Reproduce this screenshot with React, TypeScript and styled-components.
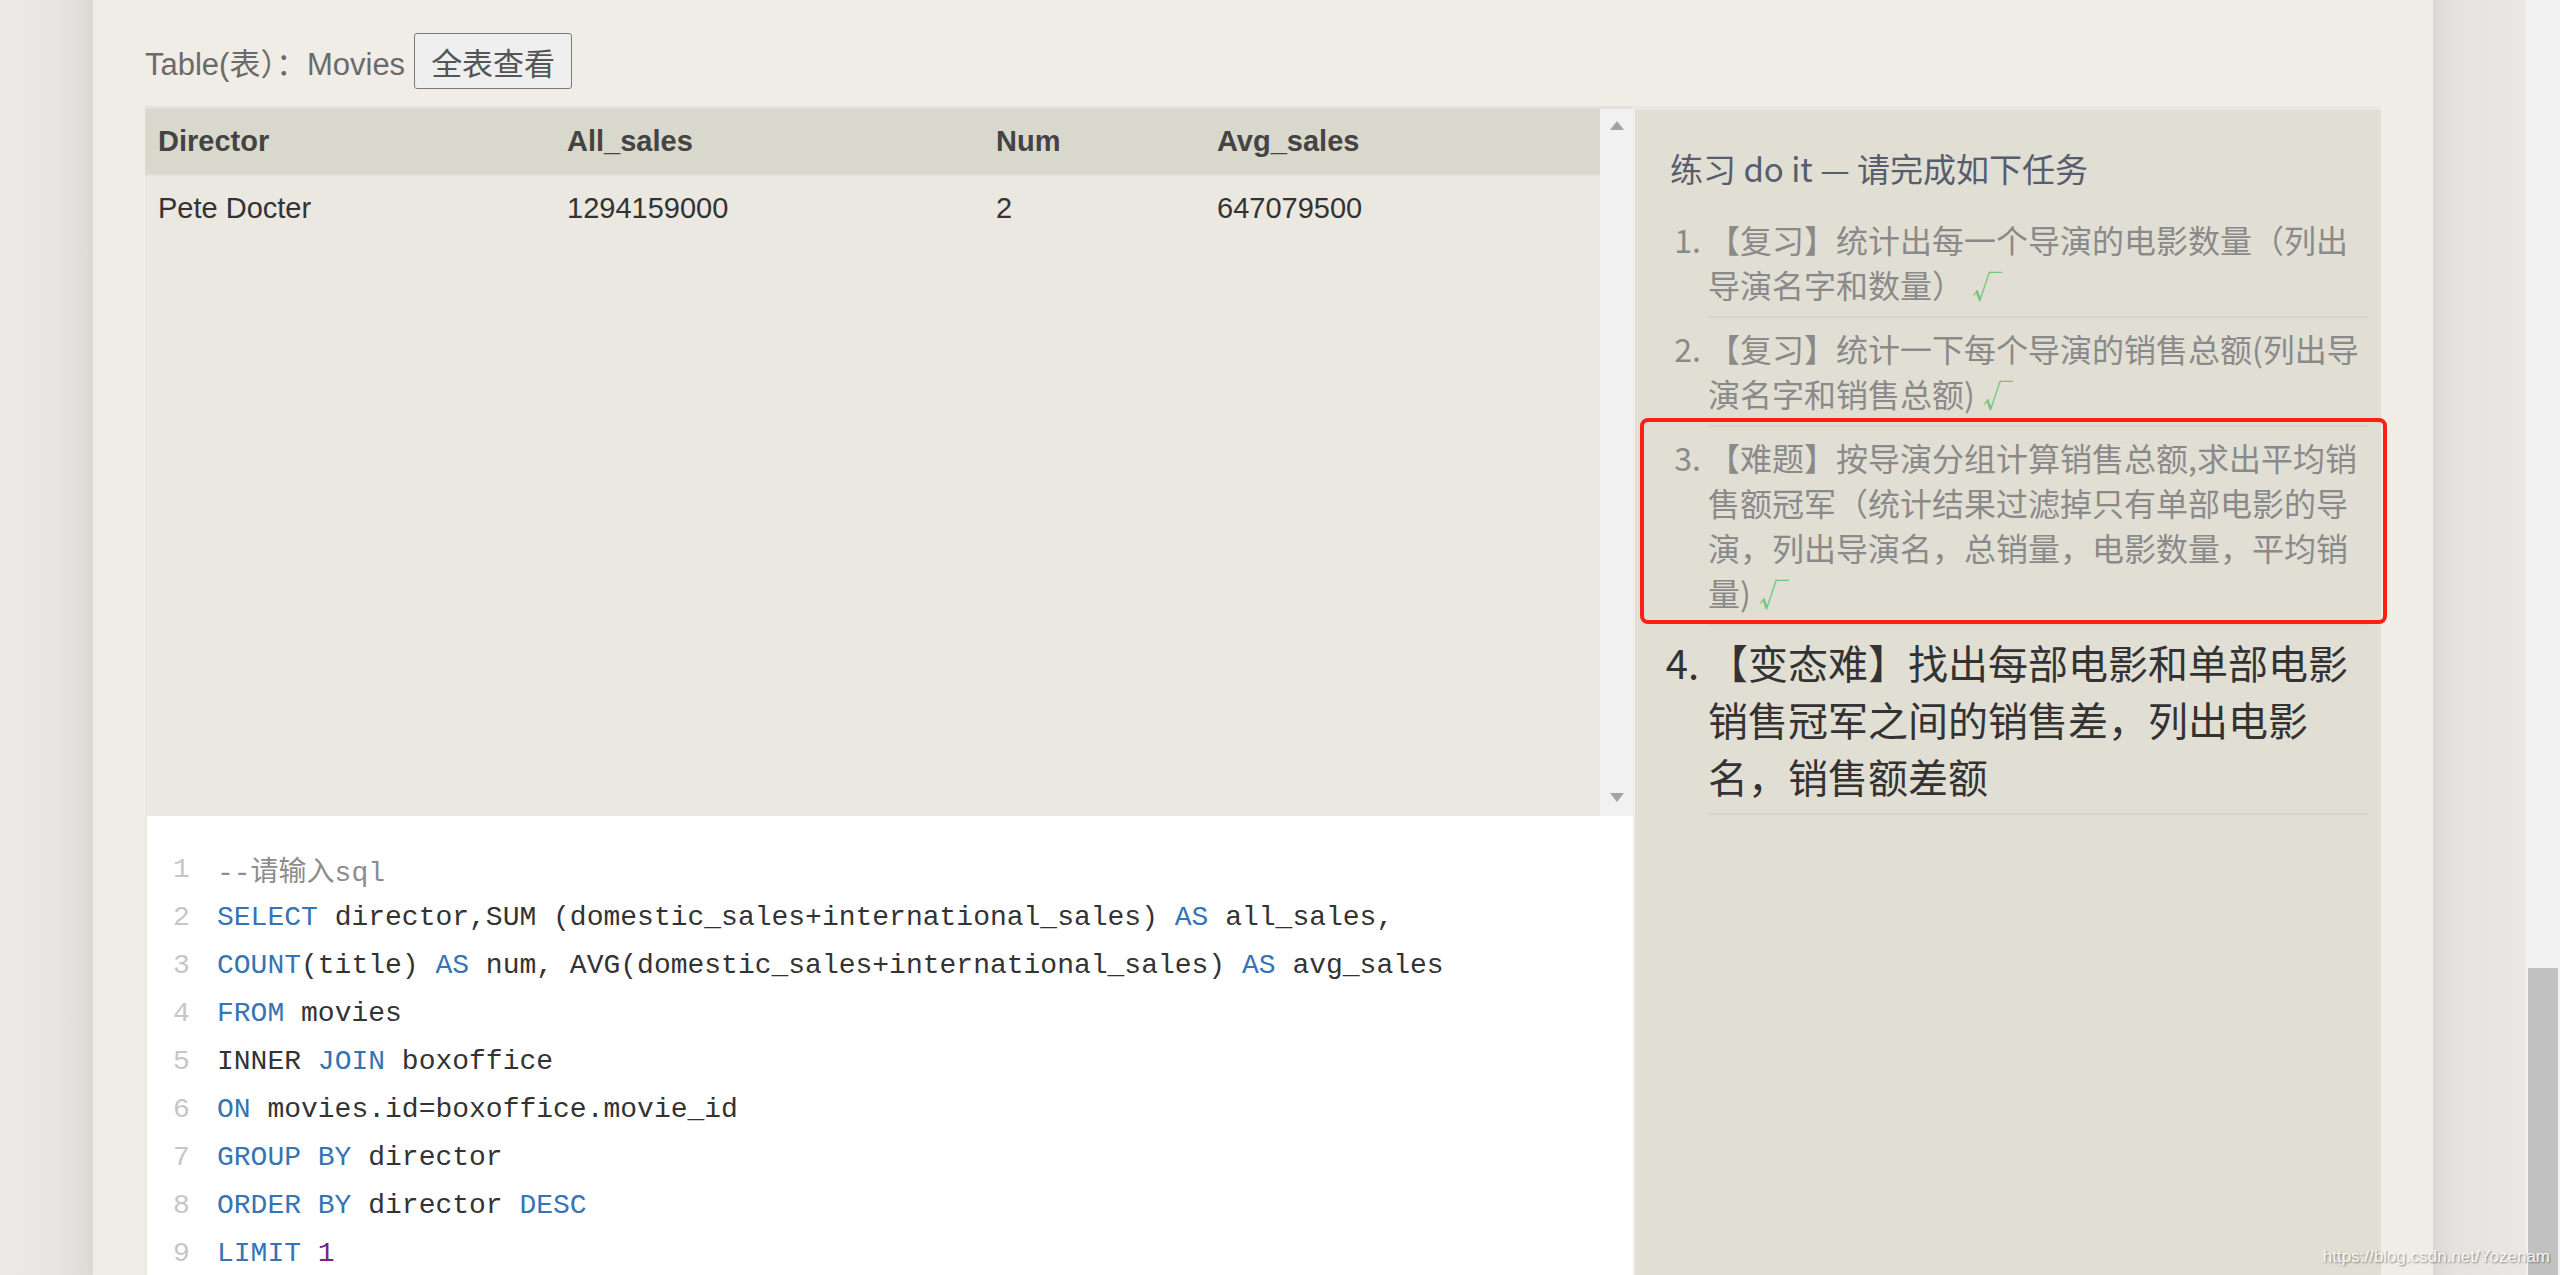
import React from "react";
import styled, {createGlobalStyle} from "styled-components";

const GlobalStyle = createGlobalStyle`
  html, body {
    margin: 0;
    padding: 0;
    overflow: hidden;
    background: #e8e4e1;
  }
  body {
    font-family: "Liberation Sans", "Noto Sans CJK SC", sans-serif;
  }
`;

const Page = styled.div`
  position: relative;
  display: flex;
  width: 2560px;
  height: 1275px;
  overflow: hidden;
`;

const Gutter = styled.div<{ $side: "left" | "right" }>`
  flex: 0 0 93px;
  background: ${p => p.$side === "left"
    ? "linear-gradient(to right, #ece9e6 0%, #e9e5e2 60%, #dcd8d4 100%)"
    : "linear-gradient(to right, #dcd8d5 0%, #e6e2df 25%, #ebe7e4 100%)"};
`;

const WinScroll = styled.div`
  flex: 0 0 34px;
  box-sizing: border-box;
  padding: 968px 0 0 2px;
  background: #f1f1f1;
`;
const WinThumb = styled.div`
  width: 30px;
  height: 320px;
  background: #c1c1c1;
`;

const Card = styled.div`
  flex: 0 0 2340px;
  box-sizing: border-box;
  display: flex;
  flex-direction: column;
  padding: 33px 52px 0;
  background: #f0ede6;
`;

const TitleRow = styled.div`
  display: flex;
  align-items: center;
  gap: 9px;
  height: 56px;
  margin-bottom: 17px;
`;
const TableLabel = styled.span`
  font-size: 31px;
  color: #6b6b6b;
  font-family: "Liberation Sans", "Noto Sans CJK SC", sans-serif;
`;
const ViewAllButton = styled.button`
  height: 56px;
  padding: 0 16px;
  font-size: 31px;
  color: #555;
  background: #efefef;
  border: 1px solid #7a7a7a;
  border-radius: 3px;
  font-family: "Noto Sans CJK SC", sans-serif;
`;

const Workspace = styled.div`
  flex: 1;
  display: flex;
  gap: 2px;
  min-height: 0;
`;

const LeftColumn = styled.div`
  flex: 0 0 1488px;
  display: flex;
  flex-direction: column;
  background: #eae8e0;
`;

const ResultBox = styled.div`
  flex: 0 0 710px;
  box-sizing: border-box;
  display: flex;
  border-top: 3px solid #e3e1dc;
`;
const ResultScroll = styled.div`
  flex: 1;
  overflow: hidden;
`;
const ResultTable = styled.table`
  width: 100%;
  border-collapse: collapse;
  table-layout: fixed;
  font-size: 29px;
`;
const HeadCell = styled.th<{ $w?: number }>`
  width: ${p => (p.$w ? `${p.$w}px` : "auto")};
  height: 65px;
  padding: 0 0 0 13px;
  text-align: left;
  font-weight: bold;
  color: #444;
  background: #d9d8cc;
  border-bottom: 2px solid #e3e1dc;
`;
const BodyCell = styled.td`
  height: 64px;
  padding: 0 0 0 13px;
  color: #333;
`;

const TableScrollbar = styled.div`
  flex: 0 0 33px;
  display: flex;
  flex-direction: column;
  justify-content: space-between;
  align-items: center;
  padding: 12px 0 14px;
  box-sizing: border-box;
  background: #f1f1f1;
`;
const Arrow = styled.div<{ $dir: "up" | "down" }>`
  width: 0;
  height: 0;
  border-left: 7px solid transparent;
  border-right: 7px solid transparent;
  ${p => p.$dir === "up"
    ? "border-bottom: 9px solid #a3a3a3;"
    : "border-top: 9px solid #a3a3a3;"}
`;

const Editor = styled.div`
  flex: 1;
  margin-left: 2px;
  padding-top: 29px;
  background: #fff;
`;
const CodeLine = styled.div`
  display: flex;
  align-items: center;
  height: 48px;
  font-family: "Liberation Mono", "Noto Sans CJK SC", monospace;
  font-size: 28px;
  color: #333;
  white-space: pre;
`;
const LineNo = styled.span`
  flex: 0 0 70px;
  box-sizing: border-box;
  padding-left: 26px;
  color: #c6c6c6;
`;
const Tok = styled.span<{ $kind: "kw" | "comment" | "num" }>`
  color: ${p => (p.$kind === "kw" ? "#3574b5" : p.$kind === "num" ? "#7b1f8c" : "#8c8c8c")};
`;

const TaskPanel = styled.div`
  flex: 0 0 746px;
  box-sizing: border-box;
  padding: 36px 13px 0 35px;
  background: #e1dfd3;
  border-top: 4px solid #e9e7df;
  font-family: "Noto Sans CJK SC", sans-serif;
`;
const TaskTitle = styled.div`
  font-size: 33px;
  line-height: 45px;
  color: #565d6e;
  margin-bottom: 18px;
`;
const TaskList = styled.ol`
  margin: 0;
  padding: 0 0 0 38px;
  list-style: decimal outside;
`;
const TaskItem = styled.li<{ $hard?: boolean }>`
  position: relative;
  padding: 8px 0;
  font-size: ${p => (p.$hard ? 40 : 32)}px;
  line-height: ${p => (p.$hard ? 57 : 45)}px;
  color: ${p => (p.$hard ? "#333" : "#8a8a8a")};
  border-bottom: 2px solid #d8d6ca;
`;
const Done = styled.span`
  display: inline-block;
  color: #72c47a;
  font-size: 30px;
  margin-left: 8px;
`;
const Highlight = styled.div`
  position: absolute;
  top: -9px;
  bottom: 0;
  left: -68px;
  right: -19px;
  border: 4px solid #ff1e16;
  border-radius: 8px;
  pointer-events: none;
`;

const Watermark = styled.div`
  position: absolute;
  right: 10px;
  bottom: 8px;
  font-family: "Liberation Sans", sans-serif;
  font-size: 17px;
  color: rgba(255, 255, 255, 0.92);
  text-shadow: 1px 1px 2px rgba(0, 0, 0, 0.45);
`;

type Piece = string | [ "kw" | "comment" | "num", string ];

const code: Piece[][] = [
    [["comment", "--请输入sql"]],
    [["kw", "SELECT"], " director,SUM (domestic_sales+international_sales) ", ["kw", "AS"], " all_sales,"],
    [["kw", "COUNT"], "(title) ", ["kw", "AS"], " num, AVG(domestic_sales+international_sales) ", ["kw", "AS"], " avg_sales"],
    [["kw", "FROM"], " movies"],
    ["INNER ", ["kw", "JOIN"], " boxoffice"],
    [["kw", "ON"], " movies.id=boxoffice.movie_id"],
    [["kw", "GROUP BY"], " director"],
    [["kw", "ORDER BY"], " director ", ["kw", "DESC"]],
    [["kw", "LIMIT"], " ", ["num", "1"]],
];

export default function App() {
    return (
        <Page>
            <GlobalStyle/>
            <Gutter $side="left"/>
            <Card>
                <TitleRow>
                    <TableLabel>Table(表）：Movies</TableLabel>
                    <ViewAllButton>全表查看</ViewAllButton>
                </TitleRow>
                <Workspace>
                    <LeftColumn>
                        <ResultBox>
                            <ResultScroll>
                                <ResultTable>
                                    <thead>
                                    <tr>
                                        <HeadCell $w={396}>Director</HeadCell>
                                        <HeadCell $w={416}>All_sales</HeadCell>
                                        <HeadCell $w={208}>Num</HeadCell>
                                        <HeadCell>Avg_sales</HeadCell>
                                    </tr>
                                    </thead>
                                    <tbody>
                                    <tr>
                                        <BodyCell>Pete Docter</BodyCell>
                                        <BodyCell>1294159000</BodyCell>
                                        <BodyCell>2</BodyCell>
                                        <BodyCell>647079500</BodyCell>
                                    </tr>
                                    </tbody>
                                </ResultTable>
                            </ResultScroll>
                            <TableScrollbar>
                                <Arrow $dir="up"/>
                                <Arrow $dir="down"/>
                            </TableScrollbar>
                        </ResultBox>
                        <Editor>
                            {code.map((line, i) => (
                                <CodeLine key={i}>
                                    <LineNo>{i + 1}</LineNo>
                                    {line.map((p, j) => typeof p === "string"
                                        ? <span key={j}>{p}</span>
                                        : <Tok key={j} $kind={p[0]}>{p[1]}</Tok>)}
                                </CodeLine>
                            ))}
                        </Editor>
                    </LeftColumn>
                    <TaskPanel>
                        <TaskTitle>练习 do it — 请完成如下任务</TaskTitle>
                        <TaskList>
                            <TaskItem>【复习】统计出每一个导演的电影数量（列出导演名字和数量）<Done>√</Done></TaskItem>
                            <TaskItem>【复习】统计一下每个导演的销售总额(列出导演名字和销售总额)<Done>√</Done></TaskItem>
                            <TaskItem>
                                【难题】按导演分组计算销售总额,求出平均销售额冠军（统计结果过滤掉只有单部电影的导演，列出导演名，总销量，电影数量，平均销量)<Done>√</Done>
                                <Highlight/>
                            </TaskItem>
                            <TaskItem $hard>【变态难】找出每部电影和单部电影销售冠军之间的销售差，列出电影名，销售额差额</TaskItem>
                        </TaskList>
                    </TaskPanel>
                </Workspace>
            </Card>
            <Gutter $side="right"/>
            <WinScroll>
                <WinThumb/>
            </WinScroll>
            <Watermark>https://blog.csdn.net/Yozenam</Watermark>
        </Page>
    );
}
